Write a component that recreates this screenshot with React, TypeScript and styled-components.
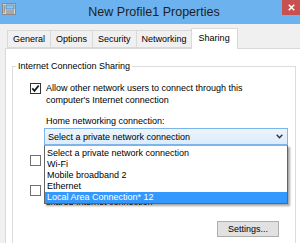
import styled, { createGlobalStyle } from "styled-components";

const GlobalStyle = createGlobalStyle`
  html, body {
    margin: 0;
    padding: 0;
  }
  body {
    width: 300px;
    height: 243px;
    overflow: hidden;
    font-family: "Liberation Sans", Arial, sans-serif;
    font-size: 9px;
    color: #000;
  }
`;

const Window = styled.div`
  width: 300px;
  height: 243px;
  display: flex;
  flex-direction: column;
  background: #f0f0f0;
  overflow: hidden;
`;

const TitleBar = styled.div`
  height: 24px;
  flex: none;
  background: #6cb2ee;
  display: grid;
  grid-template-columns: 1fr auto 1fr;
  align-items: start;
`;

const AppIcon = styled.div`
  padding: 3px 0 0 2px;
  justify-self: start;
  display: flex;
`;

const Title = styled.div`
  font-size: 12.5px;
  line-height: 24px;
  color: #1e1e1e;
  padding-left: 8px;
`;

const CloseButton = styled.div`
  justify-self: end;
  width: 18px;
  height: 15px;
  background: #c75050;
  display: flex;
  align-items: center;
  justify-content: center;
`;

const Body = styled.div`
  flex: 1;
  display: flex;
  flex-direction: column;
  padding: 4px 0 0 5px;
  min-height: 0;
`;

const TabStrip = styled.div`
  height: 20px;
  flex: none;
  display: flex;
  align-items: flex-end;
  padding-left: 2px;
`;

const Tab = styled.div<{ $active?: boolean }>`
  position: relative;
  z-index: ${(p) => (p.$active ? 2 : 1)};
  box-sizing: border-box;
  height: ${(p) => (p.$active ? "21px" : "18px")};
  margin-bottom: ${(p) => (p.$active ? "-1px" : "0")};
  margin-left: ${(p) => (p.$active ? "-2px" : "-1px")};
  padding: ${(p) => (p.$active ? "0 7px 2px" : "0 5px")};
  border: 1px solid #d9d9d9;
  border-bottom: ${(p) => (p.$active ? "none" : "1px solid #d9d9d9")};
  background: ${(p) => (p.$active ? "#fff" : "#f0f0f0")};
  display: flex;
  align-items: center;
  white-space: nowrap;

  &:first-child {
    margin-left: 0;
  }
`;

const Panel = styled.div`
  flex: 1;
  background: #fff;
  border-top: 1px solid #d9d9d9;
  border-left: 1px solid #d9d9d9;
  padding: 11px 4px 0 6px;
  min-height: 0;
`;

const GroupBox = styled.fieldset`
  margin: 0;
  padding: 0 0 20px 0;
  border: 1px solid #dcdcdc;
  min-width: 0;
`;

const GroupLabel = styled.legend`
  margin-left: 3px;
  padding: 0 2px;
  line-height: 12px;
  color: #000;
`;

const GroupContent = styled.div`
  padding: 10px 0 0 17px;
  display: flex;
  flex-direction: column;
`;

const CheckRow = styled.div<{ $gap?: number }>`
  display: flex;
  gap: 5px;
  line-height: 12px;
  margin-top: ${(p) => p.$gap ?? 0}px;
`;

const CheckBoxBox = styled.div<{ $checked?: boolean }>`
  flex: none;
  box-sizing: border-box;
  width: 11px;
  height: 11px;
  margin-top: 1px;
  border: 1px solid ${(p) => (p.$checked ? "#333" : "#707070")};
  background: #fff;
  display: flex;
  align-items: center;
  justify-content: center;
`;

const FieldLabel = styled.div`
  margin: 9px 0 0 16px;
  line-height: 12px;
`;

const ComboWrap = styled.div`
  position: relative;
  margin: 1px 7px 0 14px;
`;

const Combo = styled.div`
  box-sizing: border-box;
  height: 17px;
  border: 1px solid #7eb4ea;
  background: linear-gradient(#ecf4fc, #dcecfc);
  display: flex;
  align-items: center;
  justify-content: space-between;
  padding: 0 4px 0 3px;
`;

const DropList = styled.div`
  position: absolute;
  top: 100%;
  left: 0;
  right: 0;
  z-index: 5;
  background: #fff;
  border: 1px solid #646464;
  border-top: 1px solid #7eb4ea;
  padding-top: 2px;
  box-shadow: 2px 2px 2px rgba(0, 0, 0, 0.35);
`;

const DropItem = styled.div<{ $selected?: boolean }>`
  height: 11px;
  line-height: 11px;
  padding-left: 2px;
  background: ${(p) => (p.$selected ? "#3399ff" : "transparent")};
  color: ${(p) => (p.$selected ? "#fff" : "#000")};
  white-space: nowrap;
`;

const ButtonRow = styled.div`
  display: flex;
  justify-content: flex-end;
  margin: 13px 16px 0 0;
`;

const Button = styled.div`
  box-sizing: border-box;
  width: 62px;
  height: 16px;
  border: 1px solid #adadad;
  background: #e1e1e1;
  display: flex;
  align-items: center;
  justify-content: center;
`;

function CheckBox({ checked }: { checked?: boolean }) {
  return (
    <CheckBoxBox $checked={checked}>
      {checked && (
        <svg width="9" height="9" viewBox="0 0 9 9">
          <path d="M1.3 4.4 L3.5 6.9 L7.7 1.5" fill="none" stroke="#1a1a1a" strokeWidth="1.8" />
        </svg>
      )}
    </CheckBoxBox>
  );
}

const connections = [
  "Select a private network connection",
  "Wi-Fi",
  "Mobile broadband 2",
  "Ethernet",
  "Local Area Connection* 12",
];

const tabs = ["General", "Options", "Security", "Networking", "Sharing"];

export default function App() {
  return (
    <Window>
      <GlobalStyle />
      <TitleBar>
        <AppIcon>
          <svg width="14" height="12" viewBox="0 0 14 12">
            <rect x="0.5" y="0.5" width="13" height="11" fill="#d8d8d8" stroke="#8a8a8a" />
            <rect x="4" y="2" width="8" height="4" fill="#8cc4f0" stroke="#4f86bf" strokeWidth="0.8" />
            <rect x="1.5" y="2" width="1.5" height="8" fill="#9a9a9a" />
            <rect x="4" y="7.5" width="8" height="1" fill="#7a7a7a" />
            <rect x="4" y="9.5" width="8" height="1" fill="#7a7a7a" />
          </svg>
        </AppIcon>
        <Title>New Profile1 Properties</Title>
        <CloseButton>
          <svg width="7" height="7" viewBox="0 0 7 7">
            <path d="M0.8 0.8 L6.2 6.2 M6.2 0.8 L0.8 6.2" stroke="#fff" strokeWidth="1.6" />
          </svg>
        </CloseButton>
      </TitleBar>
      <Body>
        <TabStrip>
          {tabs.map((t) => (
            <Tab key={t} $active={t === "Sharing"}>
              {t}
            </Tab>
          ))}
        </TabStrip>
        <Panel>
          <GroupBox>
            <GroupLabel>Internet Connection Sharing</GroupLabel>
            <GroupContent>
              <CheckRow>
                <CheckBox checked />
                <div>
                  Allow other network users to connect through this
                  <br />
                  computer's Internet connection
                </div>
              </CheckRow>
              <FieldLabel>Home networking connection:</FieldLabel>
              <ComboWrap>
                <Combo>
                  <span>Select a private network connection</span>
                  <svg width="7" height="5" viewBox="0 0 7 5">
                    <path d="M0.7 0.8 L3.5 3.8 L6.3 0.8" fill="none" stroke="#333" strokeWidth="1.4" />
                  </svg>
                </Combo>
                <DropList>
                  {connections.map((c, i) => (
                    <DropItem key={c} $selected={i === connections.length - 1}>
                      {c}
                    </DropItem>
                  ))}
                </DropList>
              </ComboWrap>
              <CheckRow $gap={9}>
                <CheckBox />
                <div>
                  Establish a dial-up connection whenever a computer on
                  <br />
                  my network attempts to access the Internet
                </div>
              </CheckRow>
              <CheckRow $gap={6}>
                <CheckBox />
                <div>
                  Allow other network users to control or disable the
                  <br />
                  shared Internet connection
                </div>
              </CheckRow>
              <ButtonRow>
                <Button>Settings...</Button>
              </ButtonRow>
            </GroupContent>
          </GroupBox>
        </Panel>
      </Body>
    </Window>
  );
}
